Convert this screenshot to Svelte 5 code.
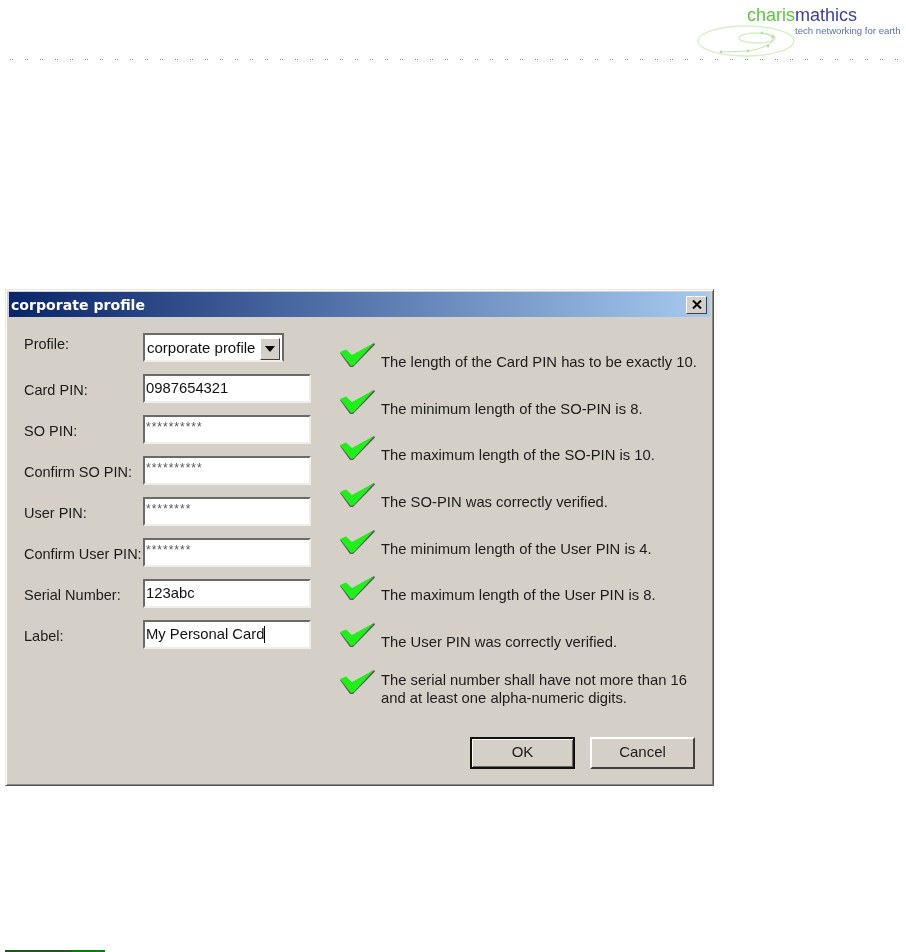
<script>
  const fields = [
    { label: 'Card PIN:', value: '0987654321' },
    { label: 'SO PIN:', value: '**********', secret: true },
    { label: 'Confirm SO PIN:', value: '**********', secret: true },
    { label: 'User PIN:', value: '********', secret: true },
    { label: 'Confirm User PIN:', value: '********', secret: true },
    { label: 'Serial Number:', value: '123abc' },
    { label: 'Label:', value: 'My Personal Card', caret: true }
  ];

  const checks = [
    'The length of the Card PIN has to be exactly 10.',
    'The minimum length of the SO-PIN is 8.',
    'The maximum length of the SO-PIN is 10.',
    'The SO-PIN was correctly verified.',
    'The minimum length of the User PIN is 4.',
    'The maximum length of the User PIN is 8.',
    'The User PIN was correctly verified.',
    'The serial number shall have not more than 16 and at least one alpha-numeric digits.'
  ];
</script>

<div class="page">
  <header class="header">
    <div class="logo">
      <svg class="orbits" width="104" height="34" viewBox="0 0 104 34" fill="none">
        <ellipse cx="50" cy="18" rx="48" ry="15" stroke="#d8eecc" stroke-width="1.5" />
        <ellipse cx="61" cy="15" rx="18" ry="5" stroke="#d8eecc" stroke-width="1.5" />
        <path d="M66 10 Q80 13 76 19 Q70 25 52 28 L25 29" stroke="#c6e4b6" stroke-width="1" />
        <circle cx="66" cy="10" r="1.4" fill="#b8dca4" />
        <circle cx="77" cy="14" r="1.4" fill="#b8dca4" />
        <circle cx="72" cy="23" r="1.4" fill="#b8dca4" />
        <circle cx="52" cy="28" r="1.4" fill="#b8dca4" />
        <circle cx="25" cy="29" r="1.4" fill="#b8dca4" />
      </svg>
      <div class="brand"><span class="green">charis</span><span class="blue">mathics</span></div>
      <div class="tagline">tech networking for earth</div>
    </div>
  </header>
  <div class="dots"></div>

  <section class="dialog">
    <div class="titlebar">
      <span class="title">corporate profile</span>
      <span class="close">
        <svg width="10" height="9" viewBox="0 0 10 9">
          <path d="M1 0.5 L9 8.5 M9 0.5 L1 8.5" stroke="#000" stroke-width="2" />
        </svg>
      </span>
    </div>

    <div class="body">
      <div class="form">
        <div class="row">
          <span class="label profile">Profile:</span>
          <div class="select">
            <span>corporate profile</span>
            <span class="arrow"></span>
          </div>
        </div>
        {#each fields as f}
          <div class="row">
            <span class="label">{f.label}</span>
            <div class="input" class:secret={f.secret}>
              {f.value}{#if f.caret}<span class="caret"></span>{/if}
            </div>
          </div>
        {/each}
      </div>

      <ul class="checks">
        {#each checks as c}
          <li>
            <svg class="tick" width="37" height="27" viewBox="0 0 37 27">
              <path d="M1 11 L11 25 L14 25 L36 2.5 L35 1 L13 14 L7 8 Z" fill="#5a5a5a" />
              <path d="M1 10 L7 7.5 L13 13 L35 1 L15 23 L12 24 Z" fill="#1ff01a" />
            </svg>
            <span>{c}</span>
          </li>
        {/each}
      </ul>
    </div>

    <div class="actions">
      <button type="button" class="btn default">OK</button>
      <button type="button" class="btn">Cancel</button>
    </div>
  </section>

  <div class="footbar"><span></span></div>
</div>

<style>
  :global(body) {
    margin: 0;
    background: #fff;
  }
  .page {
    width: 906px;
    height: 952px;
    overflow: hidden;
    font-family: "Liberation Sans", Arial, sans-serif;
    position: relative;
  }
  .header {
    height: 59px;
    display: flex;
    justify-content: flex-end;
  }
  .logo {
    width: 206px;
    height: 59px;
    position: relative;
    filter: blur(0.4px);
  }
  .orbits {
    position: absolute;
    left: -4px;
    top: 23px;
  }
  .brand {
    position: absolute;
    left: 47px;
    top: 4px;
    font-size: 18px;
    line-height: 22px;
    white-space: nowrap;
  }
  .green { color: #5cc83c; }
  .blue { color: #3b3f9f; }
  .tagline {
    position: absolute;
    left: 95px;
    top: 25px;
    font-size: 9.6px;
    line-height: 11px;
    color: #5c6fae;
    white-space: nowrap;
  }
  .dots {
    height: 1px;
    margin: 0 3px 0 10px;
    background: repeating-linear-gradient(90deg, #888 0 1px, #fff 1px 2px, #888 2px 3px, #fff 3px 15px);
  }
  .dialog {
    width: 709px;
    height: 497px;
    box-sizing: border-box;
    margin: 229px 0 0 5px;
    background: #d4d0c8;
    border: 1px solid;
    border-color: #e8e6e0 #555 #555 #e8e6e0;
    box-shadow: inset 1px 1px 0 #fff, inset -1px -1px 0 #888;
    padding: 2px 3px;
    color: #1c1c1c;
    font-size: 14.5px;
    display: flex;
    flex-direction: column;
    filter: blur(0.35px);
  }
  .titlebar {
    height: 25px;
    flex: none;
    background: linear-gradient(90deg, #0a246a, #a6caf0);
    display: flex;
    align-items: center;
    justify-content: space-between;
    padding: 0 3px 0 2px;
  }
  .title {
    color: #fff;
    font-weight: 700;
    font-family: "DejaVu Sans", Verdana, sans-serif;
    font-size: 14.1px;
  }
  .close {
    width: 21px;
    height: 18px;
    box-sizing: border-box;
    background: #d4d0c8;
    border: 1px solid;
    border-color: #fff #404040 #404040 #fff;
    display: flex;
    align-items: center;
    justify-content: center;
  }
  .body {
    display: flex;
    height: 403px;
  }
  .form {
    width: 330px;
    flex: none;
    box-sizing: border-box;
    padding: 16px 0 0 15px;
    display: flex;
    flex-direction: column;
    gap: 12.5px;
  }
  .row {
    display: flex;
    align-items: center;
    height: 28.5px;
  }
  .label {
    width: 119px;
    flex: none;
    white-space: nowrap;
    padding-top: 3px;
  }
  .label.profile {
    padding: 0 0 6px;
  }
  .input, .select {
    box-sizing: border-box;
    height: 29px;
    background: #fff;
    border: 2px solid;
    border-color: #6a6a6a #f0eee8 #f0eee8 #6a6a6a;
    display: flex;
    align-items: center;
    padding-left: 1px;
    color: #111;
    font-size: 14.8px;
  }
  .input {
    width: 168px;
  }
  .input.secret {
    align-items: flex-start;
    font-size: 12px;
    line-height: 14px;
    letter-spacing: 1px;
    color: #555;
    padding-top: 3px;
  }
  .select {
    width: 141px;
    padding-left: 2px;
    justify-content: space-between;
    padding-right: 2px;
    white-space: nowrap;
    border-right: 2px solid #6a6a6a;
    font-size: 15px;
  }
  .arrow {
    width: 20px;
    height: 22px;
    margin-top: 3px;
    box-sizing: border-box;
    background: #d4d0c8;
    border: 1px solid;
    border-color: #fff #404040 #404040 #fff;
    position: relative;
    flex: none;
  }
  .arrow::after {
    content: "";
    position: absolute;
    left: 4px;
    top: 7px;
    border: 5px solid transparent;
    border-top: 6px solid #000;
    border-bottom: 0;
  }
  .caret {
    display: inline-block;
    width: 1px;
    height: 17px;
    background: #000;
  }
  .checks {
    list-style: none;
    margin: 0;
    padding: 25px 0 0 0;
    display: flex;
    flex-direction: column;
    gap: 19.7px;
  }
  .checks li {
    display: flex;
    align-items: flex-end;
    height: 27px;
    font-size: 14.8px;
    line-height: 18px;
  }
  .checks li:last-child {
    height: auto;
    align-items: flex-start;
  }
  .checks li span {
    display: block;
    width: 325px;
    margin-left: 5px;
    position: relative;
    top: 2px;
  }
  .tick {
    flex: none;
  }
  .actions {
    display: flex;
    justify-content: flex-end;
    gap: 15px;
    padding-right: 15px;
    padding-top: 17px;
  }
  .btn {
    width: 105px;
    height: 32px;
    box-sizing: border-box;
    background: #d4d0c8;
    border: 2px solid;
    border-color: #fff #404040 #404040 #fff;
    font: inherit;
    font-size: 15px;
    color: #1c1c1c;
    padding: 0 0 3px;
  }
  .btn.default {
    border-color: #111;
    box-shadow: inset 1px 1px 0 #fff, inset -1px -1px 0 #666;
  }
  .footbar {
    position: absolute;
    left: 5px;
    bottom: 0;
    width: 100px;
    height: 2px;
    background: #008000;
  }
  .footbar span {
    display: block;
    width: 66px;
    height: 2px;
    background: #1e5a1e;
  }
</style>
